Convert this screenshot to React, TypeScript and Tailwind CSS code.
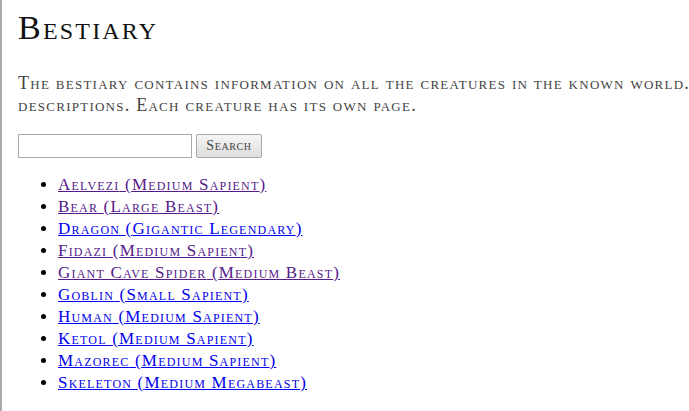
import React from 'react';

interface Creature {
  name: string;
  kind: string;
  visited: boolean;
}

const creatures: Creature[] = [
  { name: 'Aelvezi', kind: 'Medium Sapient', visited: true },
  { name: 'Bear', kind: 'Large Beast', visited: true },
  { name: 'Dragon', kind: 'Gigantic Legendary', visited: false },
  { name: 'Fidazi', kind: 'Medium Sapient', visited: true },
  { name: 'Giant Cave Spider', kind: 'Medium Beast', visited: true },
  { name: 'Goblin', kind: 'Small Sapient', visited: false },
  { name: 'Human', kind: 'Medium Sapient', visited: false },
  { name: 'Ketol', kind: 'Medium Sapient', visited: false },
  { name: 'Mazorec', kind: 'Medium Sapient', visited: false },
  { name: 'Skeleton', kind: 'Medium Megabeast', visited: false },
];

export default function App() {
  return (
    <div className="h-[411px] w-[689px] overflow-hidden bg-white border-l-2 border-[#aaaaaa] font-['Liberation_Serif',serif] [font-variant:small-caps]">
      <div className="pl-4 pt-1.5">
        <h1 className="text-[34px] leading-[44px] text-[#111] tracking-[2.2px]">Bestiary</h1>
        <p className="mt-[22px] text-[18px] leading-[22px] text-[#444] tracking-[1.25px] whitespace-nowrap">
          The bestiary contains information on all the creatures in the known world.
          <br />
          descriptions. Each creature has its own page.
        </p>
        <form className="mt-[18px] flex items-center gap-1" onSubmit={(e) => e.preventDefault()}>
          <input
            type="text"
            className="h-[24px] w-[174px] border border-[#a9a9a9] bg-white px-1 outline-none"
          />
          <button
            type="submit"
            className="h-[24px] w-[66px] rounded-[2px] border border-[#a9a9a9] bg-gradient-to-b from-[#f6f6f6] to-[#dddddd] text-[14px] leading-none text-[#444] tracking-[0.6px]"
          >
            Search
          </button>
        </form>
        <ul className="mt-[16px] list-disc pl-[40px] text-[17px] leading-[22px] tracking-[1.2px]">
          {creatures.map((c) => (
            <li key={c.name}>
              <a href="#" className={`underline ${c.visited ? 'text-[#551a8b]' : 'text-[#0000ee]'}`}>
                {c.name}{' '}
              </a>
              <a href="#" className={`underline ${c.visited ? 'text-[#551a8b]' : 'text-[#0000ee]'}`}>
                ({c.kind})
              </a>
            </li>
          ))}
        </ul>
      </div>
    </div>
  );
}
